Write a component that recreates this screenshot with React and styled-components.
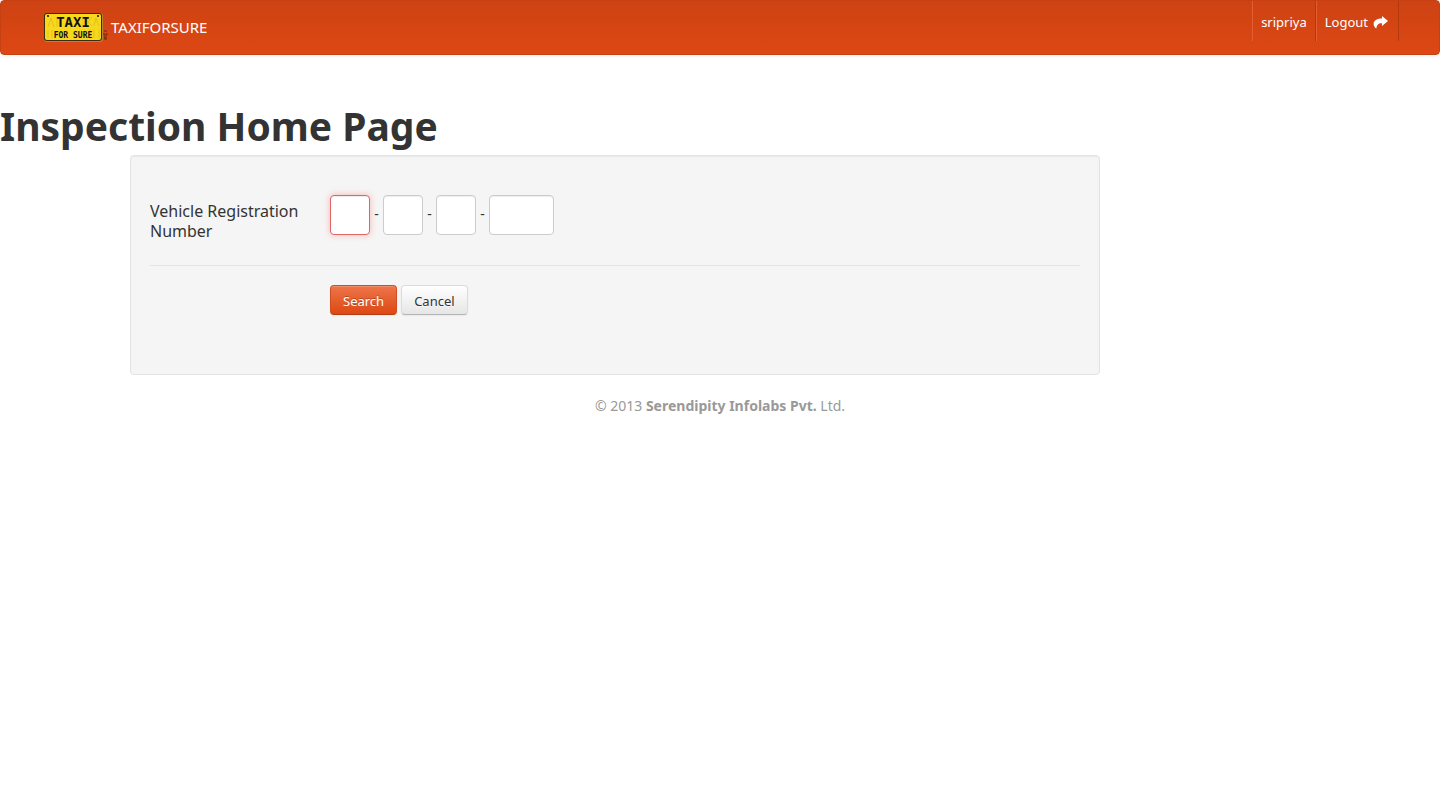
import React from "react";
import styled, { createGlobalStyle } from "styled-components";

const GlobalStyle = createGlobalStyle`
  *, *::before, *::after { box-sizing: border-box; }
  body {
    margin: 0;
    background: #fff;
    color: #333;
    font-family: "Noto Sans", "Open Sans", sans-serif;
    font-size: 14px;
    line-height: 20px;
  }
`;

const Navbar = styled.header`
  display: flex;
  justify-content: space-between;
  align-items: flex-start;
  height: 55px;
  padding: 0 40px 0 42px;
  border: 1px solid #c64012;
  border-radius: 4px;
  background: linear-gradient(to bottom, #ce4213, #dd4814);
  box-shadow: 0 1px 4px rgba(0, 0, 0, 0.07);
`;

const Brand = styled.a`
  display: flex;
  align-items: center;
  gap: 3px;
  height: 51px;
  color: #fff;
  font-size: 15px;
  text-decoration: none;
`;

const UserNav = styled.nav`
  display: flex;
  border-left: 1px solid #e35e30;
  border-right: 1px solid #b33a10;
`;

const NavLink = styled.a`
  display: flex;
  align-items: center;
  gap: 5px;
  height: 40px;
  padding: 1px 8px 0;
  color: #fff;
  font-size: 13px;
  text-decoration: none;

  & + & {
    padding: 1px 10px 0 9px;
    border-left: 1px solid #b33a10;
    box-shadow: inset 1px 0 0 #e35e30;
  }
`;

const Title = styled.h1`
  margin: 51px 0 9px;
  font-size: 39px;
  font-weight: 700;
  line-height: 40px;
`;

const Well = styled.form`
  max-width: 970px;
  min-height: 220px;
  margin-left: 130px;
  padding: 39px 19px 19px;
  border: 1px solid #e3e3e3;
  border-radius: 4px;
  background: #f5f5f5;
  box-shadow: inset 0 1px 1px rgba(0, 0, 0, 0.05);
`;

const FieldRow = styled.div`
  display: flex;
  align-items: flex-start;
  padding-bottom: 20px;
  border-bottom: 1px solid #e3e3e3;
`;

const Label = styled.label`
  width: 160px;
  margin-right: 20px;
  padding: 6px 0 4px;
  font-size: 16px;
`;

const Parts = styled.div`
  display: flex;
  align-items: flex-start;
`;

const Dash = styled.span`
  width: 13px;
  line-height: 38px;
  text-align: center;
`;

const PlateInput = styled.input`
  width: ${(p) => (p.$wide ? "65px" : "40px")};
  height: 40px;
  padding: 4px 6px;
  border: 1px solid #ccc;
  border-radius: 4px;
  background: #fff;
  color: #333;
  font: inherit;
  outline: none;
  caret-color: transparent;
  box-shadow: inset 0 1px 1px rgba(0, 0, 0, 0.075);

  &:focus {
    border-color: #e06666;
    box-shadow: inset 0 1px 1px rgba(0, 0, 0, 0.075), 0 0 6px rgba(255, 100, 100, 0.45);
  }
`;

const Actions = styled.div`
  display: flex;
  gap: 4px;
  padding: 19px 0 0 180px;
`;

const Button = styled.button`
  height: 30px;
  padding: 2px 12px 0;
  border: 1px solid;
  border-color: ${(p) => (p.$primary ? "#cf4d20 #cf4d20 #b93c11" : "#dcdcdc #dcdcdc #b3b3b3")};
  border-radius: 4px;
  background: ${(p) =>
    p.$primary
      ? "linear-gradient(to bottom, #ee7549, #dd4814)"
      : "linear-gradient(to bottom, #fff, #e6e6e6)"};
  color: ${(p) => (p.$primary ? "#fff" : "#333")};
  font-family: inherit;
  font-size: 13px;
  text-shadow: ${(p) =>
    p.$primary ? "0 -1px 0 rgba(0, 0, 0, 0.25)" : "0 1px 1px rgba(255, 255, 255, 0.75)"};
  box-shadow: inset 0 1px 0 rgba(255, 255, 255, 0.2), 0 1px 2px rgba(0, 0, 0, 0.05);
`;

const Footer = styled.footer`
  padding: 21px 0;
  color: #999;
  text-align: center;
`;

function PlateLogo() {
  return (
    <svg width="65" height="31" viewBox="0 -1 65 31" aria-hidden="true">
      <rect x="1" y="1" width="59" height="29" rx="3" fill="#b8843a" />
      <rect x="1" y="1" width="58" height="28" rx="3" fill="#3b2c0c" />
      <rect x="2" y="2" width="56" height="26" rx="2" fill="#f8d81c" />
      <path
        d="M5 15l3-9 3 9M14 7v8M5 18v8M9 18v8M12 22h4M44 5v9M49 5l-4 5 4 4M51 14l2-8 3 8M47 17v9M51 17v9M56 17v9M40 5v8M17 5v9"
        fill="none"
        stroke="#e3c01e"
      />
      <circle cx="5" cy="4" r="1" fill="#111" />
      <circle cx="55" cy="4" r="1" fill="#111" />
      <g fill="#111" fontWeight="700" textAnchor="middle" fontFamily="DejaVu Sans Mono, monospace">
        <text x="30" y="15" fontSize="14">TAXI</text>
        <text x="30" y="26" fontSize="8">FOR SURE</text>
      </g>
      <path d="M61 19h3M61 21v2h3v-2M61 25h3M61 27h3M62 25v2" stroke="#6a2810" fill="none" />
    </svg>
  );
}

function ShareIcon() {
  return (
    <svg width="15" height="14" viewBox="0 0 15 14" aria-hidden="true">
      <path d="M9 1l6 5-6 5V8.300C5.500 8.100 4 9.500 3.300 13.500C-.8 11 -1 3.600 9 3.600z" fill="#fff" />
    </svg>
  );
}

export default function App() {
  return (
    <>
      <GlobalStyle />
      <Navbar>
        <Brand href="#">
          <PlateLogo />
          TAXIFORSURE
        </Brand>
        <UserNav>
          <NavLink href="#">sripriya</NavLink>
          <NavLink href="#">
            Logout
            <ShareIcon />
          </NavLink>
        </UserNav>
      </Navbar>
      <main>
        <Title>Inspection Home Page</Title>
        <Well onSubmit={(e) => e.preventDefault()}>
          <FieldRow>
            <Label htmlFor="plate-state">Vehicle Registration Number</Label>
            <Parts>
              <PlateInput id="plate-state" maxLength={2} autoFocus />
              <Dash>-</Dash>
              <PlateInput aria-label="District code" maxLength={2} />
              <Dash>-</Dash>
              <PlateInput aria-label="Series" maxLength={2} />
              <Dash>-</Dash>
              <PlateInput aria-label="Number" maxLength={4} $wide />
            </Parts>
          </FieldRow>
          <Actions>
            <Button type="submit" $primary>Search</Button>
            <Button type="button">Cancel</Button>
          </Actions>
        </Well>
      </main>
      <Footer>
        © 2013 <strong>Serendipity Infolabs Pvt.</strong> Ltd.
      </Footer>
    </>
  );
}
